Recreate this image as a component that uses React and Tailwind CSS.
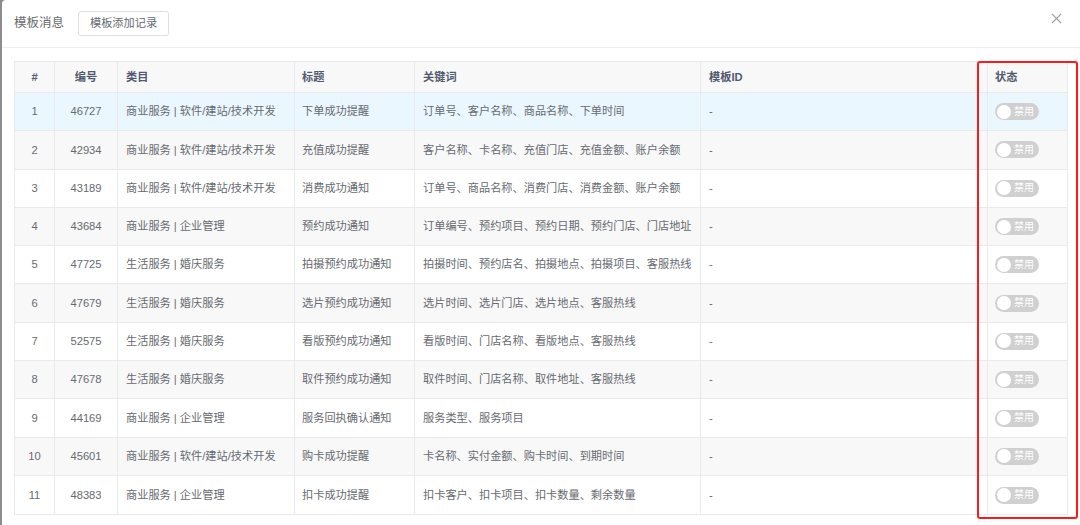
import React from "react";

const rows = [
  ["1", "46727", "商业服务 | 软件/建站/技术开发", "下单成功提醒", "订单号、客户名称、商品名称、下单时间"],
  ["2", "42934", "商业服务 | 软件/建站/技术开发", "充值成功提醒", "客户名称、卡名称、充值门店、充值金额、账户余额"],
  ["3", "43189", "商业服务 | 软件/建站/技术开发", "消费成功通知", "订单号、商品名称、消费门店、消费金额、账户余额"],
  ["4", "43684", "商业服务 | 企业管理", "预约成功通知", "订单编号、预约项目、预约日期、预约门店、门店地址"],
  ["5", "47725", "生活服务 | 婚庆服务", "拍摄预约成功通知", "拍摄时间、预约店名、拍摄地点、拍摄项目、客服热线"],
  ["6", "47679", "生活服务 | 婚庆服务", "选片预约成功通知", "选片时间、选片门店、选片地点、客服热线"],
  ["7", "52575", "生活服务 | 婚庆服务", "看版预约成功通知", "看版时间、门店名称、看版地点、客服热线"],
  ["8", "47678", "生活服务 | 婚庆服务", "取件预约成功通知", "取件时间、门店名称、取件地址、客服热线"],
  ["9", "44169", "商业服务 | 企业管理", "服务回执确认通知", "服务类型、服务项目"],
  ["10", "45601", "商业服务 | 软件/建站/技术开发", "购卡成功提醒", "卡名称、实付金额、购卡时间、到期时间"],
  ["11", "48383", "商业服务 | 企业管理", "扣卡成功提醒", "扣卡客户、扣卡项目、扣卡数量、剩余数量"],
];

function Toggle() {
  return (
    <div className="flex items-center w-[44px] h-[17px] rounded-full bg-[#d0d0d0] pl-[1.5px]">
      <div className="w-[14px] h-[14px] rounded-full bg-white shrink-0" />
      <span className="ml-[3.5px] text-[10px] leading-none text-white">禁用</span>
    </div>
  );
}

export default function App() {
  return (
    <div
      className="w-[1080px] h-[525px] bg-[#8c8c8c] flex overflow-hidden"
      style={{ fontFamily: '"Liberation Sans", "Noto Sans CJK SC", sans-serif' }}
    >
      <div className="w-[2px] shrink-0" />
      <div className="relative flex-1 bg-white rounded-tl-[4px] flex flex-col">
        <div className="h-[48px] border-b border-[#eeeeee] flex items-center pl-[12px] pr-[12px] shrink-0">
          <span className="text-[12.5px] text-[#6b6b6b] mt-[-1px]">模板消息</span>
          <div className="ml-[14px] w-[91px] h-[25px] border border-[#dcdfe6] rounded-[3px] flex items-center justify-center text-[11.2px] text-[#666a70] mt-[-1px]">
            模板添加记录
          </div>
          <div className="ml-auto mr-[6px] mt-[-11px]">
            <svg width="11" height="11" viewBox="0 0 11 11">
              <path d="M1 1 L10 10 M10 1 L1 10" stroke="#a0a0a0" strokeWidth="1.1" fill="none" />
            </svg>
          </div>
        </div>

        <div className="ml-[12px] mt-[13px] w-[1054px] border border-[#e8eaec] text-[11.2px] text-[#676a70]">
          <div className="flex h-[31px] bg-[#f8f8f9] border-b border-[#e8eaec] font-bold text-[#515a6e]">
            <div className="w-[40px] border-r border-[#e8eaec] flex items-center justify-center">#</div>
            <div className="w-[63px] border-r border-[#e8eaec] flex items-center justify-center">编号</div>
            <div className="w-[177px] border-r border-[#e8eaec] flex items-center pl-[8px]">类目</div>
            <div className="w-[120px] border-r border-[#e8eaec] flex items-center pl-[7px]">标题</div>
            <div className="w-[286px] border-r border-[#e8eaec] flex items-center pl-[8px]">关键词</div>
            <div className="w-[287px] border-r border-[#e8eaec] flex items-center pl-[8px]">模板ID</div>
            <div className="flex-1 flex items-center pl-[7px]">状态</div>
          </div>
          {rows.map((r, i) => {
            const bg = i === 0 ? "bg-[#ebf7ff]" : i % 2 === 1 ? "bg-[#f8f8f9]" : "bg-white";
            const last = i === rows.length - 1;
            return (
              <div
                key={r[0]}
                className={`flex h-[38.3px] ${bg} ${last ? "" : "border-b border-[#e8eaec]"}`}
              >
                <div className="w-[40px] border-r border-[#e8eaec] flex items-center justify-center">{r[0]}</div>
                <div className="w-[63px] border-r border-[#e8eaec] flex items-center justify-center">{r[1]}</div>
                <div className="w-[177px] border-r border-[#e8eaec] flex items-center pl-[8px] whitespace-nowrap">{r[2]}</div>
                <div className="w-[120px] border-r border-[#e8eaec] flex items-center pl-[7px] whitespace-nowrap">{r[3]}</div>
                <div className="w-[286px] border-r border-[#e8eaec] flex items-center pl-[8px] whitespace-nowrap overflow-hidden">{r[4]}</div>
                <div className="w-[287px] border-r border-[#e8eaec] flex items-center pl-[8px]">-</div>
                <div className="flex-1 flex items-center pl-[7px]">
                  <Toggle />
                </div>
              </div>
            );
          })}
        </div>

        <div className="absolute left-[975px] top-[61px] w-[101px] h-[458px] border-2 border-[#ff1a1a] rounded-[3px] pointer-events-none" />
      </div>
    </div>
  );
}
